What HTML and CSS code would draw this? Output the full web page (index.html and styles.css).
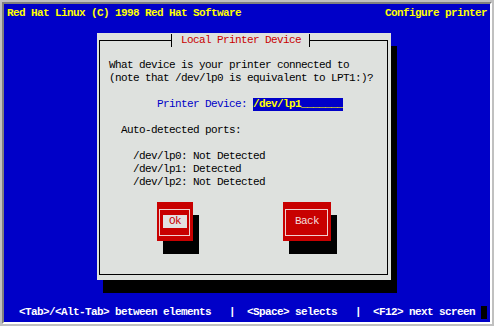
FILE: index.html
```html
<!DOCTYPE html>
<html lang="en">
<head>
    <meta charset="UTF-8">
    <meta name="viewport" content="width=device-width, initial-scale=1.0">
    <title>Configure printer</title>
    <link rel="stylesheet" href="styles.css">
</head>
<body>
    <div class="screen">
        <div class="root-line">
            <span>Red Hat Linux (C) 1998 Red Hat Software</span>
            <span>Configure printer</span>
        </div>

        <div class="desk">
            <!-- Dialog window -->
            <div class="dialog">
                <fieldset class="frame">
                    <legend class="title">Local Printer Device</legend>

                    <p class="prompt">What device is your printer connected to<br>(note that /dev/lp0 is equivalent to LPT1:)?</p>

                    <div class="field">
                        <label class="field-label" for="device">Printer Device: </label><span class="entry" id="device">/dev/lp1_______</span>
                    </div>

                    <p class="ports-title">Auto-detected ports:</p>
                    <ul class="ports">
                        <li>/dev/lp0: Not Detected</li>
                        <li>/dev/lp1: Detected</li>
                        <li>/dev/lp2: Not Detected</li>
                    </ul>

                    <div class="buttons">
                        <button class="btn btn-active"><span class="btn-frame"><span class="btn-label"> Ok </span></span></button>
                        <button class="btn"><span class="btn-frame"><span class="btn-label"> Back </span></span></button>
                    </div>
                </fieldset>
            </div>
        </div>

        <div class="help-line">
            <span class="help">  &lt;Tab&gt;/&lt;Alt-Tab&gt; between elements   |  &lt;Space&gt; selects   |  &lt;F12&gt; next screen</span>
            <span class="cursor"></span>
        </div>
    </div>
</body>
</html>
```

FILE: styles.css
```css
body, html {
    margin: 0;
    padding: 0;
    background-color: #c0c0c0; /* window frame grey */
}

.screen {
    margin: 2px;
    border: 2px solid;
    border-color: #808080 #ffffff #ffffff #808080;
    padding: 3px;
    height: 312px; /* 24 rows of 13px */
    background-color: #0000c8; /* console blue */
    display: flex;
    flex-direction: column;
    font-family: "Liberation Mono", "DejaVu Sans Mono", monospace;
    font-size: 11px;
    letter-spacing: -0.6px; /* 6px per cell */
    line-height: 13px;
    color: #000;
}

.root-line {
    display: flex;
    justify-content: space-between;
    height: 13px;
    color: #ffff00;
    font-weight: bold;
    white-space: pre;
}

.desk {
    flex: 1;
    padding: 13px 0 0 90px;
}

.dialog {
    width: 294px;
    height: 247px;
    background-color: #dee1de;
    box-shadow: 6px 13px 0 #000;
    display: flex;
    flex-direction: column;
}

.frame {
    flex: 1;
    margin: 1px 3px 5px 2px;
    border: 1px solid #000;
    padding: 0 0 0 9px;
    min-width: 0;
}

.title {
    margin-left: 62px;
    padding: 0 8px 0 9px;
    height: 13px;
    border-left: 1px solid #000;
    border-right: 1px solid #000;
    color: #c80000;
    white-space: pre;
}

.prompt {
    margin: 12px 0 0 0;
}

.field {
    margin-top: 13px;
    padding-left: 48px;
    display: flex;
    white-space: pre;
}

.field-label {
    color: #0000c8;
}

.entry {
    display: inline-block;
    width: 90px;
    height: 13px;
    background-color: #0000c8;
    color: #ffff00;
    font-weight: bold;
}

.ports-title {
    margin: 13px 0 0 0;
    padding-left: 12px;
}

.ports {
    margin: 13px 0 0 0;
    padding: 0 0 0 24px;
    list-style: none;
}

.buttons {
    margin-top: 13px;
    padding-left: 48px;
    display: flex;
    gap: 90px;
}

.btn {
    display: block;
    margin: 0;
    border: none;
    padding: 7px 3px 5px 2px;
    background-color: #c80000;
    box-shadow: 6px 13px 0 #000;
    font: inherit;
    letter-spacing: inherit;
    line-height: 13px;
    color: #f4dcdc;
    cursor: pointer;
}

.btn-frame {
    display: block;
    border: 1px solid #f0d0d0;
    padding: 5px 2px 7px 3px;
}

.btn-label {
    display: block;
    height: 13px;
    white-space: pre;
}

.btn-active .btn-label {
    background-color: #e2e2e2;
    color: #c80000;
}

.help-line {
    display: flex;
    height: 13px;
    color: #ffffff;
    font-weight: bold;
    white-space: pre;
}

.cursor {
    margin-left: auto;
    width: 6px;
    height: 13px;
    background-color: #000;
}
```
